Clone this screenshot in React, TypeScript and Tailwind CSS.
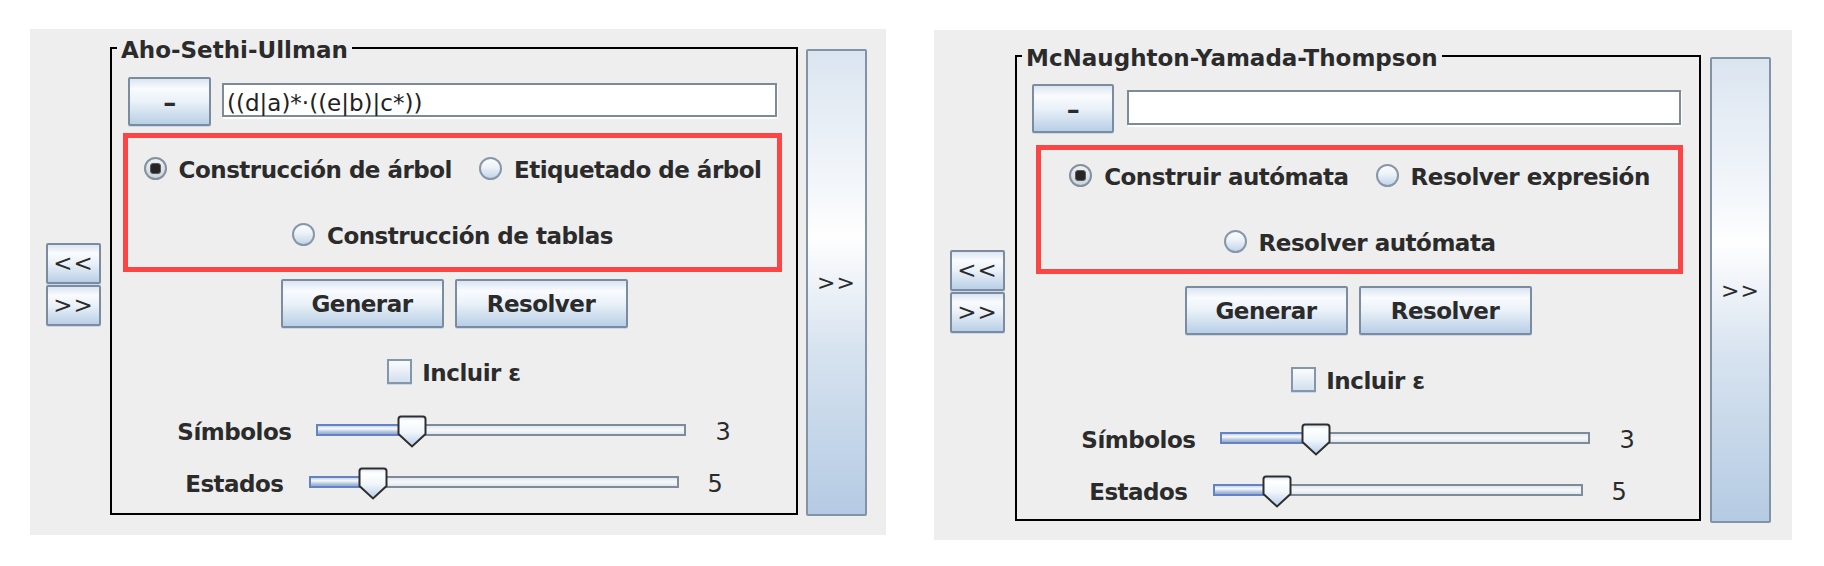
import React from "react";

type Cfg = {
  panel: string;
  col: string;
  box: string;
  rb: string;
  title: string;
  expr: string;
  row1: string;
  minus: string;
  field: string;
  red: string;
  radioPt: string;
  radioRow2Mt: string;
  radios: [string, string, string];
  btnMt: string;
  chkMt: string;
  s1Mt: string;
  s2Mt: string;
};

const BTN =
  "border-2 border-[#7b8ca0] rounded-[2px] shadow-[0_1px_0_#c9d9ea] bg-[linear-gradient(to_bottom,#dbe5f1_0%,#f9fbfe_22%,#eaf1f8_50%,#b9cfe6_100%)]";

const LBL = "text-[23px] font-bold leading-[26px] tracking-[-0.5px] text-[#2b2b2b]";

function AquaButton({ className, children }: { className: string; children?: React.ReactNode }) {
  return (
    <div className={`flex items-center justify-center text-[23px] font-bold tracking-[-0.5px] text-[#2b2b2b] ${BTN} ${className}`}>
      {children}
    </div>
  );
}

function Radio({ checked }: { checked?: boolean }) {
  if (checked) {
    return (
      <span className="flex h-[23px] w-[23px] shrink-0 items-center justify-center rounded-full border-2 border-[#84909c] bg-[linear-gradient(to_bottom,#eef2f6,#c9d4df)]">
        <span className="h-[11px] w-[11px] rounded-[3px] border border-[#5a5a5a] bg-[#262626]" />
      </span>
    );
  }
  return (
    <span className="h-[23px] w-[23px] shrink-0 rounded-full border-2 border-[#8797a9] bg-[linear-gradient(to_bottom,#fbfcfe_0%,#eef3f8_40%,#c3d5e9_100%)]" />
  );
}

function RadioItem({ label, checked }: { label: string; checked?: boolean }) {
  return (
    <div className="flex h-[26px] items-center gap-[12px]">
      <Radio checked={checked} />
      <span className={`${LBL} translate-y-[2px]`}>{label}</span>
    </div>
  );
}

function Thumb({ left }: { left: number }) {
  return (
    <svg className="absolute top-[-9px]" style={{ left }} width="30" height="33" viewBox="0 0 30 33">
      <defs>
        <linearGradient id="thumbgrad" x1="0" y1="0" x2="0" y2="1">
          <stop offset="0" stopColor="#d2e2f3" />
          <stop offset="0.15" stopColor="#ffffff" />
          <stop offset="0.5" stopColor="#f2f7fc" />
          <stop offset="1" stopColor="#b7cee9" />
        </linearGradient>
      </defs>
      <path
        d="M1.5 4 Q1.5 1.5 4 1.5 H26 Q28.5 1.5 28.5 4 V19 L15 31.5 L1.5 19 Z"
        fill="url(#thumbgrad)"
        stroke="#2e2e2e"
        strokeWidth="2"
      />
    </svg>
  );
}

function SliderRow({ label, value, thumb, className }: { label: string; value: string; thumb: number; className: string }) {
  return (
    <div className={`flex h-[32px] items-center justify-center ${className}`}>
      <span className={`${LBL} translate-y-[2px]`}>{label}</span>
      <div className="relative ml-[25px] h-[12px] w-[370px]">
        <div className="flex h-full">
          <div
            className="h-full border-2 border-r-0 border-[#6383c5] bg-[linear-gradient(to_bottom,#c9d7ec_0%,#f7f9fc_35%,#b6c8e0_70%,#93abd0_100%)]"
            style={{ width: thumb + 15 }}
          />
          <div className="h-full flex-1 border-2 border-l-0 border-[#7e8b99] bg-[linear-gradient(to_bottom,#e3e9ef,#f6f8fa_50%,#e1e7ee)]" />
        </div>
        <Thumb left={thumb} />
      </div>
      <span className="ml-[29px] translate-y-[2px] text-[24px] leading-[26px] text-[#2b2b2b]">{value}</span>
    </div>
  );
}

function Panel({ c }: { c: Cfg }) {
  return (
    <div className={`flex shrink-0 items-start bg-[#eeeeee] ${c.panel}`}>
      <div className={`flex w-[55px] flex-col gap-[1px] ${c.col}`}>
        <AquaButton className="h-[41px] w-[55px] !font-normal !tracking-[1px]">{"<<"}</AquaButton>
        <AquaButton className="h-[41px] w-[55px] !font-normal !tracking-[1px]">{">>"}</AquaButton>
      </div>

      <div className={`relative flex shrink-0 flex-col border-2 border-black ${c.box}`}>
        <span className="absolute left-[5px] top-[-12px] bg-[#eeeeee] px-[4px] text-[23px] font-bold leading-[26px] text-[#2b2b2b]">
          {c.title}
        </span>

        <div className={`flex items-start ${c.row1}`}>
          <AquaButton className={`shrink-0 ${c.minus}`}>
            <span className="mt-[3px] text-[26px]">–</span>
          </AquaButton>
          <div
            className={`flex-1 border-2 border-[#7d8a98] bg-white pl-[3px] pt-[7px] text-[23px] leading-[22px] text-[#222] shadow-[1px_2px_0_#ffffff] ${c.field}`}
          >
            {c.expr}
          </div>
        </div>

        <div className={`flex flex-col border-[5px] border-[#fc4545] ${c.red}`}>
          <div className={`flex items-center justify-center gap-[27px] ${c.radioPt}`}>
            <RadioItem label={c.radios[0]} checked />
            <RadioItem label={c.radios[1]} />
          </div>
          <div className={`flex items-center justify-center ${c.radioRow2Mt}`}>
            <RadioItem label={c.radios[2]} />
          </div>
        </div>

        <div className={`flex justify-center gap-[11px] ${c.btnMt}`}>
          <AquaButton className="h-[49px] w-[163px]">
            <span className="mt-[2px]">Generar</span>
          </AquaButton>
          <AquaButton className="h-[49px] w-[173px]">
            <span className="mt-[2px]">Resolver</span>
          </AquaButton>
        </div>

        <div className={`flex h-[26px] items-center justify-center gap-[10px] ${c.chkMt}`}>
          <span className="h-[25px] w-[25px] border-2 border-[#8396aa] bg-[linear-gradient(to_bottom,#fbfcfe,#d3e0ee)] shadow-[0_1px_0_#c9d9ea]" />
          <span className={`${LBL} translate-y-[2px]`}>Incluir ε</span>
        </div>

        <SliderRow className={c.s1Mt} label="Símbolos" value="3" thumb={81} />
        <SliderRow className={c.s2Mt} label="Estados" value="5" thumb={49} />
      </div>

      <div
        className={`flex shrink-0 items-center justify-center rounded-[2px] border-2 border-[#8193a7] bg-[linear-gradient(to_bottom,#dbe5f0_0%,#f4f7fb_30%,#fefefe_40%,#d6e2ef_65%,#b5cbe3_100%)] text-[22px] tracking-[1px] text-[#2b2b2b] ${c.rb}`}
      >
        {">>"}
      </div>
    </div>
  );
}

const LEFT: Cfg = {
  panel: "ml-[30px] mt-[29px] w-[856px] h-[506px]",
  col: "mt-[214px] ml-[16px]",
  box: "ml-[9px] mt-[18px] w-[688px] h-[468px]",
  rb: "ml-[8px] mt-[20px] w-[61px] h-[467px]",
  title: "Aho-Sethi-Ullman",
  expr: "((d|a)*·((e|b)|c*))",
  row1: "pt-[28px] pl-[16px] pr-[19px]",
  minus: "w-[83px] h-[49px]",
  field: "ml-[11px] mt-[6px] h-[34px]",
  red: "mt-[7px] ml-[11px] mr-[14px] h-[139px]",
  radioPt: "mt-[17px]",
  radioRow2Mt: "mt-[40px]",
  radios: ["Construcción de árbol", "Etiquetado de árbol", "Construcción de tablas"],
  btnMt: "mt-[7px]",
  chkMt: "mt-[30px]",
  s1Mt: "mt-[30px]",
  s2Mt: "mt-[20px]",
};

const RIGHT: Cfg = {
  panel: "ml-[48px] mt-[30px] w-[858px] h-[510px]",
  col: "mt-[220px] ml-[16px]",
  box: "ml-[10px] mt-[25px] w-[686px] h-[466px]",
  rb: "ml-[9px] mt-[27px] w-[61px] h-[466px]",
  title: "McNaughton-Yamada-Thompson",
  expr: "",
  row1: "pt-[27px] pl-[15px] pr-[18px]",
  minus: "w-[82px] h-[49px]",
  field: "ml-[13px] mt-[6px] h-[35px]",
  red: "mt-[12px] ml-[19px] mr-[16px] h-[129px]",
  radioPt: "mt-[12px]",
  radioRow2Mt: "mt-[40px]",
  radios: ["Construir autómata", "Resolver expresión", "Resolver autómata"],
  btnMt: "mt-[12px]",
  chkMt: "mt-[31px]",
  s1Mt: "mt-[30px]",
  s2Mt: "mt-[20px]",
};

export default function App() {
  return (
    <div className="flex h-[566px] w-[1824px] items-start overflow-hidden bg-white font-['DejaVu_Sans',sans-serif]">
      <Panel c={LEFT} />
      <Panel c={RIGHT} />
    </div>
  );
}
